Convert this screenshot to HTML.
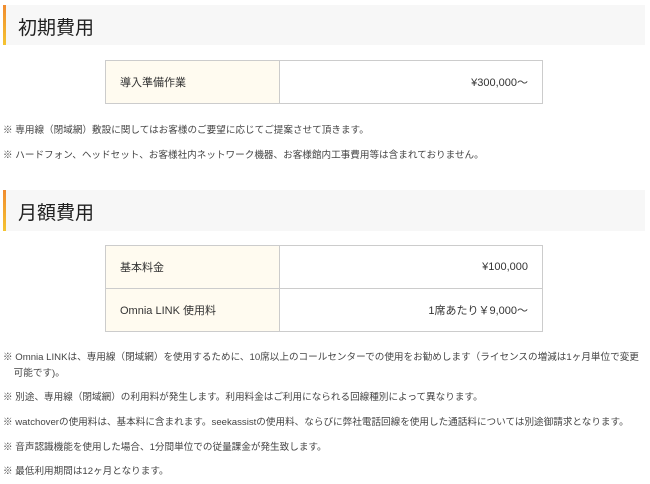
<!DOCTYPE html>
<html><head><meta charset="utf-8"><style>
body{margin:0;width:650px;height:484px;background:#fff;font-family:"Liberation Sans","Noto Sans CJK JP",sans-serif;color:#333;position:relative;overflow:hidden}
.h{position:absolute;left:3px;width:642px;height:40px;background:#f7f7f7;border-left:3px solid #f5b731;box-sizing:border-box}
.h span{position:absolute;left:12px;top:8px;font-size:19px;color:#222}
table{position:absolute;left:105px;width:438px;border-collapse:collapse;font-size:11px}
td{border:1px solid #ccc;height:42px;padding:0}
td.l{background:#fffbf0;padding-left:14px;box-sizing:border-box;width:174px}
td.r{text-align:right;padding-right:14px}
.n{position:absolute;left:3px;font-size:9.6px;color:#444;white-space:nowrap;line-height:16px}
</style></head><body>
<div class="h" style="top:5px;border-image:linear-gradient(#f08a30,#f5c531) 1"><span>初期費用</span></div>
<table style="top:60px"><tr><td class="l">導入準備作業</td><td class="r">¥300,000～</td></tr></table>
<div class="n" style="top:123px">※ 専用線（閉域網）敷設に関してはお客様のご要望に応じてご提案させて頂きます。</div>
<div class="n" style="top:148px">※ ハードフォン、ヘッドセット、お客様社内ネットワーク機器、お客様館内工事費用等は含まれておりません。</div>
<div class="h" style="top:190px;height:41px;border-image:linear-gradient(#f08a30,#f5c531) 1"><span>月額費用</span></div>
<table style="top:245px"><tr><td class="l" style="height:43px">基本料金</td><td class="r">¥100,000</td></tr><tr><td class="l" style="height:43px">Omnia LINK 使用料</td><td class="r">1席あたり￥9,000～</td></tr></table>
<div class="n" style="top:350px">※ Omnia LINKは、専用線（閉域網）を使用するために、10席以上のコールセンターでの使用をお勧めします（ライセンスの増減は1ヶ月単位で変更<br>&nbsp;&nbsp;&nbsp;&nbsp;可能です)。</div>
<div class="n" style="top:390px">※ 別途、専用線（閉域網）の利用料が発生します。利用料金はご利用になられる回線種別によって異なります。</div>
<div class="n" style="top:415px">※ watchoverの使用料は、基本料に含まれます。seekassistの使用料、ならびに弊社電話回線を使用した通話料については別途御請求となります。</div>
<div class="n" style="top:440px">※ 音声認識機能を使用した場合、1分間単位での従量課金が発生致します。</div>
<div class="n" style="top:464px">※ 最低利用期間は12ヶ月となります。</div>
</body></html>
